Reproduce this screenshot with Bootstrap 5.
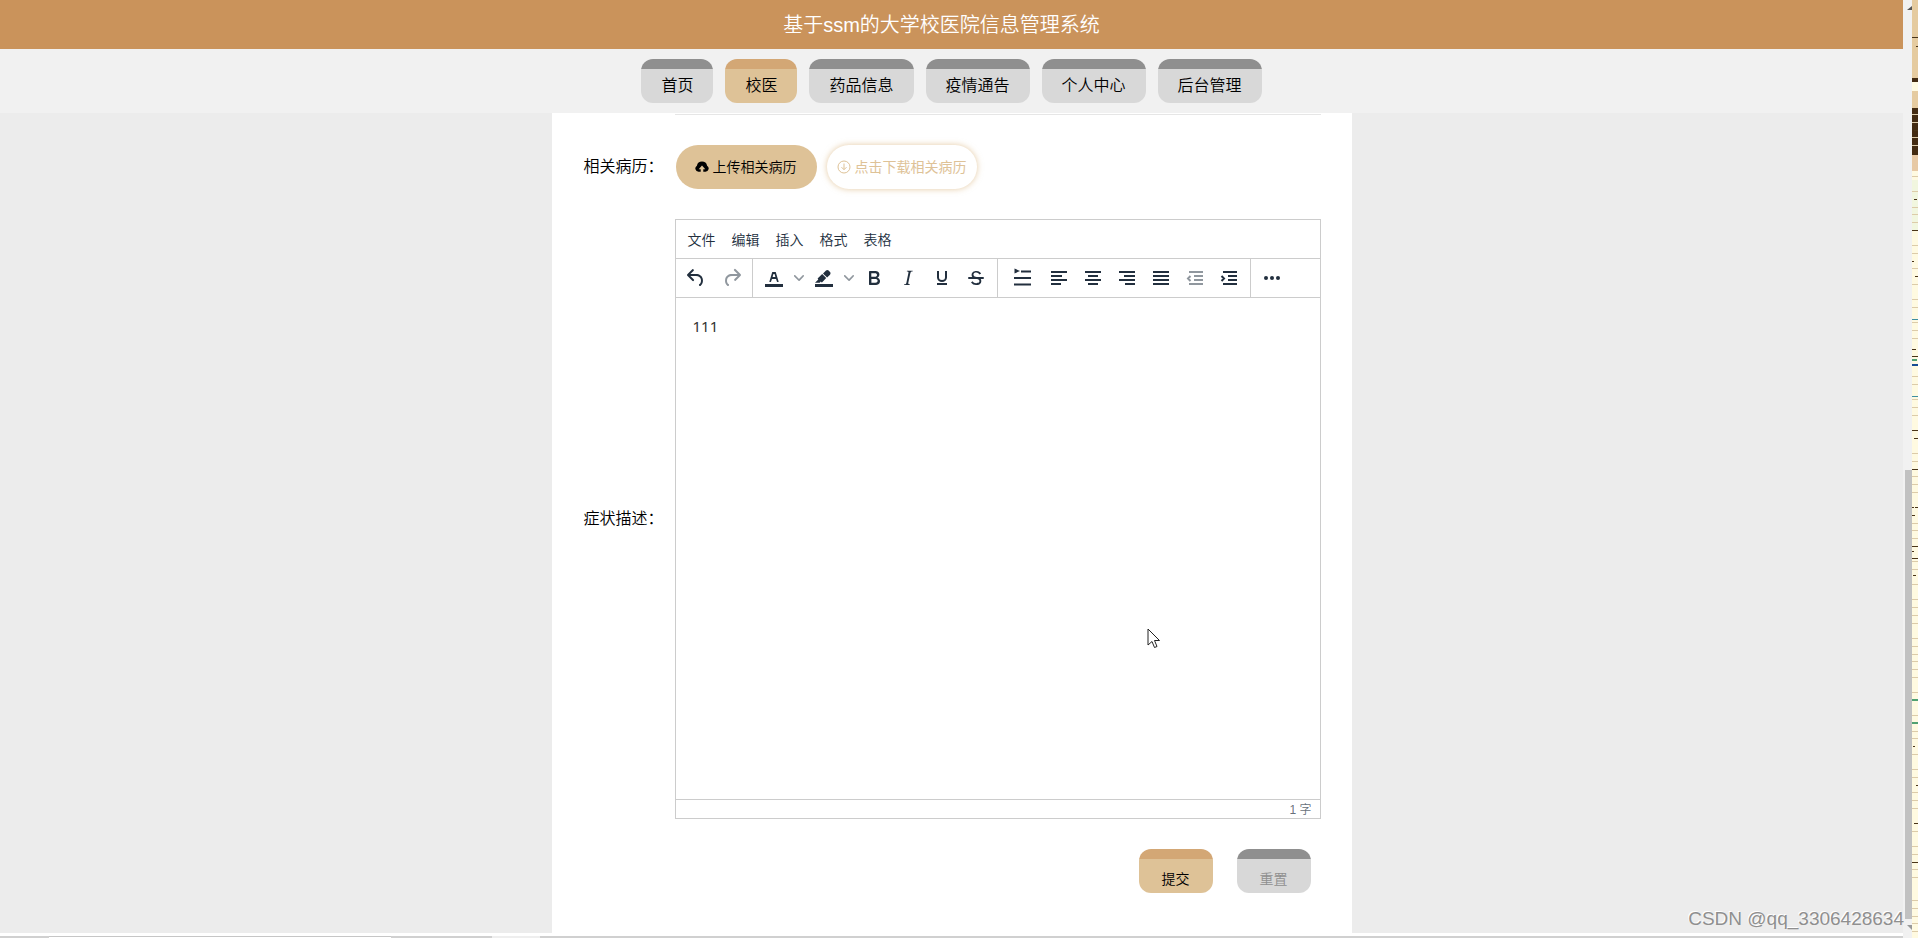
<!DOCTYPE html>
<html lang="zh-CN">
<head>
<meta charset="utf-8">
<meta name="viewport" content="width=device-width, initial-scale=1">
<title>基于ssm的大学校医院信息管理系统</title>
<link rel="stylesheet" href="https://cdn.jsdelivr.net/npm/bootstrap@5.3.0/dist/css/bootstrap.min.css">
<style>
  :root { --sand:#dec297; --clay:#d3a775; --ink:#222f3e; --rule:#ccc; }
  body { font-family:"Liberation Sans","Noto Sans CJK SC",sans-serif; font-size:16px; font-weight:350; line-height:24px; color:#000; background:#fff; }
  button, textarea { font-family:inherit; font-weight:inherit; }
  .app-title { height:49px; background:#ca935b; color:#fff; padding:1px 20px 0 0; }
  .app-title h1 { font-size:20px; line-height:24px; font-weight:350; }
  .site-nav { height:64px; background:#f1f1f1; gap:12px; }
  .tab { display:block; height:44px; padding:16px 20px 0; border:0; border-radius:12px; background:linear-gradient(#8f8f8f 10px, #d8d8d8 10px); color:#000; line-height:22px; text-decoration:none; text-align:center; white-space:nowrap; }
  .tab-sand { background:linear-gradient(var(--clay) 10px, var(--sand) 10px); }
  .tab-form { width:74px; font-size:14px; padding:16px 0 0; }
  .tab-muted { color:#8f8f8f; }
  .page-bg { background:#ececec; }
  .sheet { width:800px; max-width:100%; background:#fff; padding:1px 31px 0 32px; }
  .field-label { width:91px; flex:none; }
  .field-rule { margin-left:91px; border-top:1px solid #e6e6e6; }
  .upload-row { padding:30px 0; }
  .pill-set { gap:10px; }
  .pill { height:44px; border:0; border-radius:22px; font-size:14px; line-height:20px; gap:4px; }
  .pill-up { background:var(--sand); color:#000; padding:0 20px 0 19px; margin-left:1px; }
  .pill-down { background:#fff; color:var(--sand); padding:0 10px; box-shadow:0 0 6px rgba(210,165,100,.6); font-weight:400; }
  .editor { border:1px solid var(--rule); color:var(--ink); }
  .editor-menu { height:39px; gap:16px; padding:1px 12px 0; border-bottom:1px solid var(--rule); }
  .editor-menu button { border:0; background:none; padding:0; font-size:14px; line-height:20px; color:var(--ink); }
  .toolbar { height:39px; border-bottom:1px solid var(--rule); }
  .tool-group { border-right:1px solid var(--rule); padding:0 4px; }
  .tool-group:first-child { padding:0 2px; }
  .tool-group:last-child { border-right:0; }
  .tool { border:0; background:none; padding:0; width:34px; height:34px; display:flex; align-items:center; justify-content:center; color:var(--ink); }
  .tool svg { fill:currentColor; }
  .tool:disabled, .tool-arrow { color:#222f3e80; }
  .tool-wide { width:36px; }
  .tool-lead { width:40px; }
  .tool-arrow { width:16px; }
  .tool .bars { fill:none; stroke:currentColor; stroke-width:2; stroke-linecap:butt; }
  .editor-text { height:501px; border:0; resize:none; outline:0; display:block; padding:17px; font:15px/22px "Noto Sans",sans-serif; color:#333; }
  .editor-status { height:19px; border-top:1px solid var(--rule); padding:1px 8px 0; font-size:12px; line-height:19px; color:#222f3eb3; }
  .actions { gap:24px; padding:30px 10px 40px; }
  .scroll-rail { width:9px; background:#f1f1f1; padding:6px 0 8px 2px; color:#555; }
  .scroll-thumb { height:449px; background:#c1c1c1; }
  .side-map { width:6px; background:#fffae1; overflow:hidden; }
  .bottom-edge { height:5px; border-top:3px solid #fff; background:#d0d0d0; }
  .edge-tab { width:342px; margin-left:49px; background:#fff; border-top:1px solid #c6c6c6; }
  .edge-light { width:48px; margin-left:101px; background:#eee; }
  .credit { right:14px; bottom:7px; font-size:19px; line-height:24px; color:#8f8f8f; text-shadow:-1px -1px 0 #fff; }
  .pointer { left:595px; bottom:283px; }
</style>
</head>
<body>
<div class="d-flex vh-100 overflow-hidden">
  <div class="d-flex flex-column flex-grow-1">
    <header class="app-title d-flex align-items-center justify-content-center flex-shrink-0"><h1 class="m-0">基于ssm的大学校医院信息管理系统</h1></header>
    <nav class="site-nav d-flex align-items-center justify-content-center flex-shrink-0">
      <a class="tab" href="#">首页</a>
      <a class="tab tab-sand" href="#" aria-current="page">校医</a>
      <a class="tab" href="#">药品信息</a>
      <a class="tab" href="#">疫情通告</a>
      <a class="tab" href="#">个人中心</a>
      <a class="tab" href="#">后台管理</a>
    </nav>
    <main class="page-bg flex-grow-1 d-flex justify-content-center">
      <form class="sheet position-relative">
        <div class="field-rule"></div>
        <div class="upload-row d-flex align-items-center">
          <label class="field-label" for="upload">相关病历：</label>
          <div class="pill-set d-flex">
            <button id="upload" type="button" class="pill pill-up d-flex align-items-center">
              <svg width="14" height="14" viewBox="0 0 14 14" fill="currentColor"><path d="M3.500 11.800A3.300 3.300 0 0 1 1.900 5.700a5.200 5.200 0 0 1 10.200 0 3.300 3.300 0 0 1-1.600 6.100H8.300V9.200h2L7 5.500 3.700 9.200h2v2.600z"/></svg>
              <span>上传相关病历</span>
            </button>
            <button type="button" class="pill pill-down d-flex align-items-center">
              <svg width="14" height="14" viewBox="0 0 14 14" fill="none" stroke="currentColor"><circle cx="7" cy="7" r="6"/><path d="M7 3.500v6M4.500 7.200 7 9.700l2.500-2.500"/></svg>
              <span>点击下载相关病历</span>
            </button>
          </div>
        </div>
        <div class="d-flex align-items-center">
          <label class="field-label" for="symptoms">症状描述：</label>
          <div class="editor flex-grow-1">
            <div class="editor-menu d-flex align-items-center">
              <button type="button">文件</button><button type="button">编辑</button><button type="button">插入</button><button type="button">格式</button><button type="button">表格</button>
            </div>
            <div class="toolbar d-flex">
              <div class="tool-group d-flex align-items-center">
                <button type="button" class="tool tool-wide" aria-label="撤销"><svg width="24" height="24"><path d="M6.400 8H12c3.700 0 6.200 2 6.800 5.100.6 2.700-.4 5.600-2.300 6.800a1 1 0 0 1-1-1.800c1.100-.6 1.800-2.700 1.400-4.600-.5-2.100-2.100-3.500-4.900-3.500H6.400l3.300 3.300a1 1 0 1 1-1.400 1.400l-5-5a1 1 0 0 1 0-1.400l5-5a1 1 0 0 1 1.400 1.400L6.400 8z"/></svg></button>
                <button type="button" class="tool tool-wide" disabled aria-label="重做"><svg width="24" height="24"><path d="M17.600 10H12c-2.800 0-4.400 1.400-4.900 3.500-.4 2 .3 4 1.400 4.600a1 1 0 1 1-1 1.800c-2-1.200-2.900-4.100-2.300-6.800.6-3 3-5.100 6.800-5.100h5.600l-3.300-3.300a1 1 0 1 1 1.400-1.400l5 5a1 1 0 0 1 0 1.400l-5 5a1 1 0 0 1-1.400-1.400z"/></svg></button>
              </div>
              <div class="tool-group d-flex align-items-center">
                <button type="button" class="tool" aria-label="文字颜色"><svg width="24" height="24"><path d="M3 18h18v3H3z"/><path fill-rule="evenodd" d="M8.700 16h-.8a.5.5 0 0 1-.5-.6l2.700-9c.1-.3.3-.4.5-.4h2.800c.2 0 .4.1.5.4l2.700 9a.5.5 0 0 1-.5.6h-.8a.5.5 0 0 1-.4-.4l-.7-2.200c0-.3-.3-.4-.5-.4h-3.400c-.2 0-.4.1-.5.4l-.7 2.200c0 .3-.2.4-.4.4zm2.600-7.600-.6 2a.5.5 0 0 0 .5.6h1.600a.5.5 0 0 0 .5-.6l-.6-2c0-.3-.3-.4-.5-.4h-.4c-.2 0-.4.1-.5.4z"/></svg></button>
                <button type="button" class="tool tool-arrow" aria-label="选择文字颜色"><svg width="10" height="10"><path d="M8.700 2.200c.3-.3.8-.3 1 0 .4.4.4.9 0 1.200L5.700 7.800c-.3.3-.9.3-1.200 0L.2 3.400a.8.8 0 0 1 0-1.200c.3-.3.8-.3 1.100 0L5 6z"/></svg></button>
                <button type="button" class="tool" aria-label="背景颜色"><svg width="24" height="24"><path d="M3 18h18v3H3zM7.700 16.700H3l3.300-3.300-.7-.8L10.200 8l4 4.100-4 4.200c-.2.2-.6.2-.8 0l-.6-.7zm5-7.500L11 7.400l3-2.900a2 2 0 0 1 2.600 0L18 6c.7.7.7 2 0 2.700l-2.900 2.900-1.800-1.800z"/></svg></button>
                <button type="button" class="tool tool-arrow" aria-label="选择背景颜色"><svg width="10" height="10"><path d="M8.700 2.200c.3-.3.8-.3 1 0 .4.4.4.9 0 1.200L5.700 7.800c-.3.3-.9.3-1.200 0L.2 3.400a.8.8 0 0 1 0-1.200c.3-.3.8-.3 1.100 0L5 6z"/></svg></button>
                <button type="button" class="tool" aria-label="粗体"><svg width="24" height="24"><path fill-rule="evenodd" d="M7.800 19c-.3 0-.5 0-.6-.2l-.2-.5V5.700c0-.2 0-.4.2-.5l.6-.2h5c1.500 0 2.700.3 3.500 1 .7.6 1.100 1.400 1.100 2.500a3 3 0 0 1-.6 1.900c-.4.6-1 1-1.600 1.200.4.1.9.3 1.300.6s.8.7 1 1.200c.4.4.5 1 .5 1.600 0 1.300-.4 2.300-1.300 3-.8.7-2.100 1-3.800 1zm5-8.300c.6 0 1.200-.1 1.600-.5.4-.3.6-.7.6-1.300 0-1.100-.8-1.700-2.300-1.700H9.300v3.500zm.5 6c.7 0 1.300-.1 1.700-.4.4-.4.6-.9.6-1.500s-.2-1-.7-1.400c-.4-.3-1-.4-2-.4H9.400v3.800z"/></svg></button>
                <button type="button" class="tool" aria-label="斜体"><svg width="24" height="24"><path d="m16.700 4.700-.1.900h-.3c-.6 0-1 0-1.400.3-.3.3-.4.6-.5 1.100l-2.100 9.800v.6c0 .5.4.8 1.400.8h.2l-.2.8H8l.2-.8h.2c1.100 0 1.800-.5 2-1.500l2-9.800.1-.5c0-.6-.4-.8-1.400-.8h-.3l.2-.9z"/></svg></button>
                <button type="button" class="tool" aria-label="下划线"><svg width="24" height="24"><path class="bars" d="M8 5v6.500a4 3.500 0 0 0 8 0V5M7 18h10"/></svg></button>
                <button type="button" class="tool" aria-label="删除线"><svg width="24" height="24"><path d="M15.600 8.500c-.5-.7-1-1.100-1.300-1.300-.6-.4-1.300-.6-2-.6-2.700 0-2.800 1.700-2.800 2.100 0 1.600 1.800 2 3.200 2.300 4.400.9 4.600 2.800 4.600 3.900 0 1.400-.7 4.100-5 4.100A6.200 6.200 0 0 1 7 16.400l1.500-1.100c.4.6 1.600 2 3.700 2 1.600 0 2.500-.4 3-1.200.4-.8.3-2-.8-2.600-.7-.4-1.600-.7-2.900-1-1-.2-3.900-.8-3.900-3.600C7.600 6 10.300 5 12.400 5c2.900 0 4.200 1.600 4.700 2.400zM5 11h14a1 1 0 0 1 0 2H5a1 1 0 0 1 0-2z"/></svg></button>
              </div>
              <div class="tool-group d-flex align-items-center">
                <button type="button" class="tool tool-lead" aria-label="首行缩进"><svg width="24" height="24"><path d="M4.500 2.500 10 5 4.500 7.500z"/><path class="bars" d="M11 5.500h10M4 12h17M4 18.500h17"/></svg></button>
                <button type="button" class="tool" aria-label="左对齐"><svg width="24" height="24"><path class="bars" d="M4 6h16M4 10h11M4 14h16M4 18h10"/></svg></button>
                <button type="button" class="tool" aria-label="居中"><svg width="24" height="24"><path class="bars" d="M4 6h16M7 10h10M4 14h16M7 18h10"/></svg></button>
                <button type="button" class="tool" aria-label="右对齐"><svg width="24" height="24"><path class="bars" d="M4 6h16M9 10h11M4 14h16M10 18h10"/></svg></button>
                <button type="button" class="tool" aria-label="两端对齐"><svg width="24" height="24"><path class="bars" d="M4 6h16M4 10h16M4 14h16M4 18h16"/></svg></button>
                <button type="button" class="tool" disabled aria-label="减少缩进"><svg width="24" height="24"><path class="bars" d="M6 6h14M11 10h9M11 14h9M6 18h14M7.500 10 5 12.500l2.500 2.500"/></svg></button>
                <button type="button" class="tool" aria-label="增加缩进"><svg width="24" height="24"><path class="bars" d="M6 6h14M11 10h9M11 14h9M6 18h14M4.500 10 7 12.500 4.500 15"/></svg></button>
              </div>
              <div class="tool-group d-flex align-items-center">
                <button type="button" class="tool" aria-label="更多"><svg width="24" height="24"><circle cx="6" cy="12" r="2"/><circle cx="12" cy="12" r="2"/><circle cx="18" cy="12" r="2"/></svg></button>
              </div>
            </div>
            <textarea id="symptoms" class="editor-text w-100">111</textarea>
            <div class="editor-status text-end">1 字</div>
          </div>
        </div>
        <div class="actions d-flex justify-content-end">
          <button type="submit" class="tab tab-sand tab-form">提交</button>
          <button type="reset" class="tab tab-form tab-muted">重置</button>
        </div>
        <svg class="pointer position-absolute" width="14" height="22" viewBox="0 0 14 22" fill="#fff" stroke="#222"><path d="M1 1v16l4-3.500 2.500 6 2.500-1-2.500-6h5z"/></svg>
      </form>
    </main>
    <div class="bottom-edge d-flex flex-shrink-0"><div class="edge-tab"></div><div class="edge-light"></div></div>
  </div>
  <div class="scroll-rail d-flex flex-column flex-shrink-0">
    <svg width="7" height="5" fill="currentColor"><path d="M2 4 7 0v4z"/></svg>
    <div class="mt-auto"><div class="scroll-thumb"></div><svg class="d-block mt-1" width="7" height="7" fill="#999"><path d="M2 2h5v5z"/></svg></div>
  </div>
  <aside class="side-map flex-shrink-0" aria-hidden="true">
    <svg class="d-block" width="6" height="938" shape-rendering="crispEdges">
      <path fill="#e5cba0" d="M0 0h6v78H0zM0 91h6v17H0z"/><path fill="#e7c9a5" d="M0 155h6v16H0z"/>
      <path fill="#f1f6df" d="M0 180h6v50H0z"/>
      <path fill="#432b12" d="M0 78h6v4H0zM0 108h6v47H0z"/>
      <path stroke="#dccba9" d="M0 114.500h6M0 122.500h6M0 137.500h6M0 145.500h6M0 176.500h6M0 191.500h6M0 207.500h6M0 214.500h6M0 222.500h6M0 245.500h6M0 253.500h6M0 268.500h6M0 284.500h6M0 299.500h6M0 307.500h6M0 322.500h6M0 330.500h6M0 338.500h6M0 376.500h6M0 384.500h6M0 399.500h6M0 407.500h6M0 415.500h6M0 453.500h6M0 461.500h6M0 476.500h6M0 484.500h6M0 492.500h6M0 523.500h6M0 530.500h6M0 538.500h6M0 561.500h6M0 569.500h6M0 584.500h6M0 599.500h6M0 607.500h6M0 615.500h6M0 623.500h6M0 638.500h6M0 646.500h6M0 654.500h6M0 661.500h6M0 669.500h6M0 677.500h6M0 692.500h6M0 715.500h6M0 731.500h6M0 738.500h6M0 754.500h6M0 769.500h6M0 777.500h6M0 792.500h6M0 800.500h6M0 808.500h6M0 831.500h6M0 846.500h6M0 854.500h6M0 869.500h6M0 877.500h6M0 900.500h6M0 908.500h6M0 916.500h6M0 923.500h6M0 931.500h6"/>
      <path stroke="#4a3518" d="M0 37.500h6M4 46.500h2M2 130.500h4M2 199.500h3M0 230.500h6M0 261.500h2M3 276.500h3M0 349.500h4M0 356.500h6M0 430.500h6M2 438.500h4M0 469.500h6M0 507.500h2M3 507.500h3M0 515.500h3M0 546.500h6M0 551.500h2M0 558.500h6M1 575.500h3M1 746.500h2M4 785.500h2M2 823.500h4M0 862.500h6"/>
      <path stroke="#3d8ea0" d="M0 319.500h6M0 396.500h6"/><path stroke="#174b94" stroke-width="2" d="M0 365h6"/>
      <path stroke="#4fa172" stroke-width="2" d="M0 360h5M0 700h6M0 723h6"/>
    </svg>
  </aside>
  <div class="credit position-absolute">CSDN @qq_3306428634</div>
</div>
<script src="https://cdn.jsdelivr.net/npm/bootstrap@5.3.0/dist/js/bootstrap.bundle.min.js"></script>
</body>
</html>
